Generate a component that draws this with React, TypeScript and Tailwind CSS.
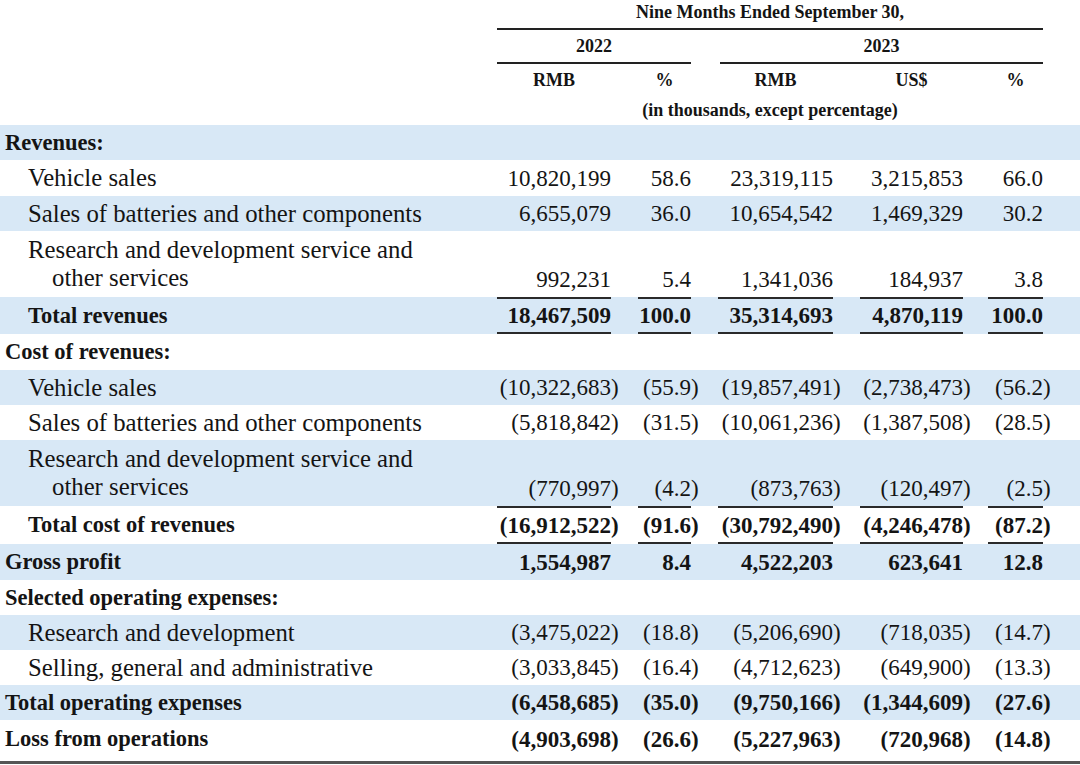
type Row = {
  label: string[];
  bold?: boolean;
  indent?: boolean;
  blue?: boolean;
  values?: string[];
  ruled?: boolean;
  h: string;
};

const rows: Row[] = [
  { label: ['Revenues:'], bold: true, blue: true, h: 'h-[35px]' },
  { label: ['Vehicle sales'], indent: true, values: ['10,820,199', '58.6', '23,319,115', '3,215,853', '66.0'], h: 'h-[36px]' },
  { label: ['Sales of batteries and other components'], indent: true, blue: true, values: ['6,655,079', '36.0', '10,654,542', '1,469,329', '30.2'], h: 'h-[35px]' },
  { label: ['Research and development service and', 'other services'], indent: true, values: ['992,231', '5.4', '1,341,036', '184,937', '3.8'], h: 'h-[66px]' },
  { label: ['Total revenues'], bold: true, indent: true, blue: true, ruled: true, values: ['18,467,509', '100.0', '35,314,693', '4,870,119', '100.0'], h: 'h-[37px]' },
  { label: ['Cost of revenues:'], bold: true, h: 'h-[36px]' },
  { label: ['Vehicle sales'], indent: true, blue: true, values: ['(10,322,683)', '(55.9)', '(19,857,491)', '(2,738,473)', '(56.2)'], h: 'h-[35px]' },
  { label: ['Sales of batteries and other components'], indent: true, values: ['(5,818,842)', '(31.5)', '(10,061,236)', '(1,387,508)', '(28.5)'], h: 'h-[35px]' },
  { label: ['Research and development service and', 'other services'], indent: true, blue: true, values: ['(770,997)', '(4.2)', '(873,763)', '(120,497)', '(2.5)'], h: 'h-[66px]' },
  { label: ['Total cost of revenues'], bold: true, indent: true, ruled: true, values: ['(16,912,522)', '(91.6)', '(30,792,490)', '(4,246,478)', '(87.2)'], h: 'h-[38px]' },
  { label: ['Gross profit'], bold: true, blue: true, values: ['1,554,987', '8.4', '4,522,203', '623,641', '12.8'], h: 'h-[36px]' },
  { label: ['Selected operating expenses:'], bold: true, h: 'h-[35px]' },
  { label: ['Research and development'], indent: true, blue: true, values: ['(3,475,022)', '(18.8)', '(5,206,690)', '(718,035)', '(14.7)'], h: 'h-[35px]' },
  { label: ['Selling, general and administrative'], indent: true, values: ['(3,033,845)', '(16.4)', '(4,712,623)', '(649,900)', '(13.3)'], h: 'h-[35px]' },
  { label: ['Total operating expenses'], bold: true, blue: true, values: ['(6,458,685)', '(35.0)', '(9,750,166)', '(1,344,609)', '(27.6)'], h: 'h-[35px]' },
  { label: ['Loss from operations'], bold: true, values: ['(4,903,698)', '(26.6)', '(5,227,963)', '(720,968)', '(14.8)'], h: 'h-[37px]' },
];

// column boxes: width + gap before it
const cols = [
  'w-[114px]',
  'ml-[27px] w-[53px]',
  'ml-[27px] w-[115px]',
  'ml-[27px] w-[103px]',
  'ml-[25px] w-[55px]',
];

function Amount({ v }: { v: string }) {
  if (v.endsWith(')')) {
    return (
      <>
        {v.slice(0, -1)}
        <span className="inline-block w-0">)</span>
      </>
    );
  }
  return <>{v}</>;
}

export default function App() {
  return (
    <div
      className="w-[1080px] h-[765px] overflow-hidden bg-white text-[#141414]"
      style={{ fontFamily: '"Liberation Serif", "Times New Roman", serif' }}
    >
      {/* column headings */}
      <div className="h-[125px] flex flex-col font-bold">
        <div className="h-[30px] flex">
          <div className="w-[497px]" />
          <div className="w-[546px] border-b-2 border-[#222] flex items-end justify-center pb-[7px] text-[18px] leading-none">
            Nine Months Ended September 30,
          </div>
        </div>
        <div className="h-[34px] flex">
          <div className="w-[497px]" />
          <div className="w-[194px] border-b-2 border-[#222] flex items-end justify-center pb-[7px] text-[18px] leading-none">
            2022
          </div>
          <div className="ml-[29px] w-[323px] border-b-2 border-[#222] flex items-end justify-center pb-[7px] text-[18px] leading-none">
            2023
          </div>
        </div>
        <div className="h-[31px] flex items-center text-[18px] leading-none">
          <div className="w-[497px]" />
          <div className="w-[114px] text-center">RMB</div>
          <div className="ml-[27px] w-[53px] text-center">%</div>
          <div className="ml-[27px] w-[115px] text-center">RMB</div>
          <div className="ml-[27px] w-[103px] text-center">US$</div>
          <div className="ml-[25px] w-[55px] text-center">%</div>
        </div>
        <div className="h-[30px] flex items-center text-[18px] leading-none">
          <div className="w-[497px]" />
          <div className="w-[546px] text-center">(in thousands, except percentage)</div>
        </div>
      </div>

      {/* body */}
      <div className="flex flex-col">
        {rows.map((r, i) => (
          <div key={i} className={`flex ${r.h} ${r.blue ? 'bg-[#d8e8f6]' : 'bg-white'}`}>
            <div
              className={`w-[497px] flex flex-col justify-center leading-[28px] ${
                r.indent ? 'pl-[28px]' : 'pl-[5px]'
              } ${r.bold ? 'font-bold text-[22.5px]' : 'text-[24.75px]'}`}
            >
              {r.label.map((l, j) => (
                <div key={j} className={j > 0 ? 'pl-[24px]' : ''}>
                  {l}
                </div>
              ))}
            </div>
            {r.values &&
              r.values.map((v, j) => (
                <div
                  key={j}
                  className={`${cols[j]} flex items-end justify-end text-[23px] leading-[28px] ${
                    r.bold ? 'font-bold' : ''
                  } ${r.ruled ? 'border-y-2 border-[#2a2a2a] pb-[2px]' : 'pb-[3px]'}`}
                >
                  <span className="whitespace-nowrap">
                    <Amount v={v} />
                  </span>
                </div>
              ))}
          </div>
        ))}
        <div className="mt-[4px] h-[3px] bg-[#555]" />
      </div>
    </div>
  );
}
